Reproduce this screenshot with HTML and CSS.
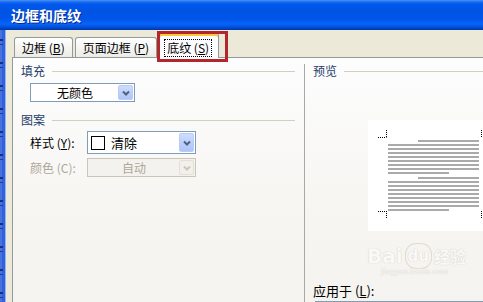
FILE: index.html
```html
<!DOCTYPE html>
<html lang="zh-CN">
<head>
    <meta charset="UTF-8">
    <title>边框和底纹</title>
    <link rel="stylesheet" href="styles.css">
</head>
<body>
    <div class="window">
        <div class="titlebar">
            <span class="title">边框和底纹</span>
        </div>
        <div class="frame">
            <div class="frame-edge"></div>
            <div class="dialog">
                <div class="tabs">
                    <div class="tab">边框 (<u>B</u>)</div>
                    <div class="tab">页面边框 (<u>P</u>)</div>
                    <div class="tab active"><span class="focus">底纹 (<u>S</u>)</span></div>
                </div>
                <div class="mark"></div>

                <div class="panel">
                    <div class="col-left">
                        <div class="group-head">填充</div>
                        <div class="combo combo-fill">
                            <span class="combo-text">无颜色</span>
                            <span class="combo-btn">
                                <svg width="8" height="6" viewBox="0 0 8 6"><path d="M1 1.5 L4 4.5 L7 1.5" /></svg>
                            </span>
                        </div>

                        <div class="group-head pattern">图案</div>
                        <div class="field-row">
                            <label class="field-label">样式 (<u>Y</u>):</label>
                            <div class="combo combo-style">
                                <span class="swatch"></span>
                                <span class="combo-value">清除</span>
                                <span class="combo-btn">
                                    <svg width="8" height="6" viewBox="0 0 8 6"><path d="M1 1.5 L4 4.5 L7 1.5" /></svg>
                                </span>
                            </div>
                        </div>
                        <div class="field-row">
                            <label class="field-label disabled">颜色 (C):</label>
                            <div class="combo combo-color disabled">
                                <span class="combo-text">自动</span>
                                <span class="combo-btn">
                                    <svg width="8" height="6" viewBox="0 0 8 6"><path d="M1 1.5 L4 4.5 L7 1.5" /></svg>
                                </span>
                            </div>
                        </div>
                    </div>

                    <div class="divider"></div>

                    <div class="col-right">
                        <div class="group-head">预览</div>
                        <div class="preview">
                            <svg width="130" height="111" viewBox="0 0 130 111">
                                <g class="corners">
                                    <path d="M10 17.5 H18.5 M18.5 10 V18" />
                                    <path d="M113.5 10 V18" />
                                    <path d="M10 91.5 H18.5 M18.5 91 V99" />
                                    <path d="M113.5 91 V99" />
                                </g>
                                <g class="lines">
                                    <rect x="50" y="20" width="61" height="2" />
                                    <rect x="20" y="24" width="91" height="2" />
                                    <rect x="20" y="28" width="91" height="2" />
                                    <rect x="20" y="32" width="91" height="2" />
                                    <rect x="20" y="36" width="91" height="2" />
                                    <rect x="20" y="40" width="91" height="2" />
                                    <rect x="20" y="44" width="91" height="2" />
                                    <rect x="20" y="48" width="91" height="2" />
                                    <rect x="20" y="52" width="61" height="2" />
                                    <rect x="50" y="57" width="61" height="2" />
                                    <rect x="20" y="61" width="91" height="2" />
                                    <rect x="20" y="65" width="91" height="2" />
                                    <rect x="20" y="69" width="91" height="2" />
                                    <rect x="20" y="73" width="91" height="2" />
                                    <rect x="20" y="77" width="91" height="2" />
                                    <rect x="20" y="81" width="91" height="2" />
                                    <rect x="20" y="85" width="91" height="2" />
                                    <rect x="20" y="89" width="61" height="2" />
                                </g>
                            </svg>
                        </div>
                        <div class="apply-label">应用于 (<u>L</u>):</div>
                        <div class="combo combo-apply"></div>

                        <div class="watermark">
                            <div class="wm-logo">Bai<span class="wm-paw">du</span><span class="wm-cn">经验</span></div>
                            <div class="wm-url">jingyan.baidu.com</div>
                        </div>
                    </div>
                </div>
            </div>
        </div>
    </div>
</body>
</html>
```

FILE: styles.css
```css
body {
    margin: 0;
    width: 483px;
    height: 302px;
    overflow: hidden;
    background-color: #ECE9D8;
    font-family: "Noto Sans CJK SC", "Noto Sans", sans-serif;
    font-size: 12px;
    color: #000;
}
u {
    text-decoration: underline;
    text-underline-offset: 1px;
}
.window {
    width: 640px;
    height: 302px;
    display: flex;
    flex-direction: column;
}
.titlebar {
    height: 30px;
    flex: none;
    box-sizing: border-box;
    padding-left: 11px;
    display: flex;
    align-items: center;
    background: linear-gradient(#4A92F5 0, #1A6BF0 2px, #0058EE 4px, #0054E3 12px, #0055EA 19px, #0A64F8 24px, #0052DE 27px, #0036A8 30px);
}
.title {
    color: #fff;
    font-weight: bold;
    font-size: 14px;
    line-height: 16px;
    text-shadow: 1px 1px #0A2D8F;
}
.frame {
    flex: 1;
    display: flex;
}
.frame-edge {
    width: 6px;
    flex: none;
    background:
        repeating-linear-gradient(180deg, transparent 0 9px, #1A2F7A 9px 11px, transparent 11px 14px, #24399A 14px 15px, transparent 15px 23px) 0 0 / 3px 100% no-repeat,
        linear-gradient(90deg, #4A72D8 0 2px, #2F62E2 2px 5px, #9AB2EE 5px 6px);
}
.dialog {
    flex: 1;
    display: flex;
    flex-direction: column;
    padding-left: 6px;
    position: relative;
}
.tabs {
    height: 27px;
    flex: none;
    display: flex;
    align-items: flex-end;
    gap: 2px;
    padding-left: 2px;
    position: relative;
    z-index: 1;
}
.tab {
    height: 20px;
    box-sizing: border-box;
    padding: 0 7px;
    display: flex;
    align-items: center;
    border: 1px solid #919B9C;
    border-bottom: none;
    border-radius: 3px 3px 0 0;
    background: linear-gradient(#FFFFFF, #ECEBE6);
    line-height: 14px;
    white-space: pre;
}
.tab.active {
    height: 25px;
    margin-bottom: -1px;
    padding: 3px 6px 0 4px;
    border-top: 1px solid #E68B2C;
    box-shadow: inset 0 2px 0 #FFC73C;
    background: #FCFCFE;
}
.focus {
    border: 1px dotted #000;
    padding: 1px 2px;
}
.mark {
    position: absolute;
    left: 151px;
    top: 1px;
    width: 71px;
    height: 31px;
    box-sizing: border-box;
    border: 3px solid #B3262B;
    z-index: 2;
}
.panel {
    flex: 1;
    display: flex;
    border-top: 1px solid #919B9C;
    border-left: 1px solid #919B9C;
    background: linear-gradient(#FDFDFE, #F6F5F1 60%, #F5F3EF);
}
.col-left {
    width: 291px;
    flex: none;
    box-sizing: border-box;
    padding: 6px 9px 0 8px;
}
.group-head {
    height: 14px;
    line-height: 14px;
    display: flex;
    align-items: center;
    gap: 7px;
    color: #1F3D68;
}
.group-head::after {
    content: "";
    flex: 1;
    border-top: 1px solid #D0D0BF;
}
.group-head.pattern {
    margin-top: 11px;
}
.combo {
    display: flex;
    align-items: center;
    box-sizing: border-box;
    border: 1px solid #7F9DB9;
    background: #fff;
    padding: 1px;
}
.combo-text {
    flex: 1;
    text-align: center;
    line-height: 14px;
}
.combo-btn {
    width: 15px;
    align-self: stretch;
    box-sizing: border-box;
    display: flex;
    align-items: center;
    justify-content: center;
    border: 1px solid #B9CCF8;
    border-radius: 2px;
    background: linear-gradient(#CEDCFD, #AEC5F6);
}
.combo-btn path {
    fill: none;
    stroke: #4D6185;
    stroke-width: 2;
}
.combo-fill {
    width: 105px;
    height: 19px;
    margin: 5px 0 0 9px;
}
.field-row {
    display: flex;
    align-items: center;
    margin: 4px 0 0 9px;
}
.field-label {
    width: 57px;
    line-height: 14px;
    white-space: pre;
}
.field-label.disabled {
    color: #ACA899;
}
.combo-style {
    width: 109px;
    height: 23px;
}
.swatch {
    width: 14px;
    height: 14px;
    box-sizing: border-box;
    border: 1px solid #000;
    margin-left: 2px;
}
.combo-value {
    flex: 1;
    margin-left: 6px;
    font-size: 13px;
    line-height: 14px;
}
.combo-color {
    width: 109px;
    height: 19px;
}
.combo.disabled {
    border-color: #C9C7BA;
    background: #F3F2EE;
    color: #ACA899;
}
.combo.disabled .combo-btn {
    border-color: #E2E0D6;
    background: #F1F0EA;
}
.combo.disabled .combo-btn path {
    stroke: #C9C7BA;
}
.divider {
    width: 1px;
    flex: none;
    margin-top: 6px;
    background: #A9A8A1;
}
.col-right {
    flex: 1;
    padding: 6px 0 0 8px;
    position: relative;
}
.preview {
    width: 130px;
    height: 111px;
    margin: 42px 0 0 55px;
    background: #fff;
}
.preview svg {
    display: block;
}
.corners path {
    fill: none;
    stroke: #000;
    stroke-width: 1;
    stroke-dasharray: 1 1;
}
.lines rect {
    fill: #AAAAAA;
}
.apply-label {
    margin-top: 53px;
    line-height: 14px;
    font-size: 13px;
    white-space: pre;
}
.combo-apply {
    width: 200px;
    height: 22px;
    margin: 3px 0 0 2px;
}
.watermark {
    position: absolute;
    left: 62px;
    top: 186px;
    color: #FAF9F6;
    text-shadow: 0 0 1px #D6D2CA, 0 0 1px #D6D2CA;
}
.wm-logo {
    display: flex;
    align-items: center;
    font-family: "DejaVu Sans", sans-serif;
    font-weight: bold;
    font-size: 20px;
    line-height: 24px;
}
.wm-paw {
    margin-left: 3px;
    padding: 0 2px;
    border-radius: 10px;
    box-shadow: 0 0 0 1px #E0DCD4;
    font-size: 15px;
}
.wm-cn {
    margin-left: 3px;
    font-family: "Noto Sans CJK SC", sans-serif;
    font-size: 16px;
}
.wm-url {
    margin: -2px 0 0 14px;
    font-family: "Liberation Serif", serif;
    font-size: 9px;
    line-height: 10px;
}
```
